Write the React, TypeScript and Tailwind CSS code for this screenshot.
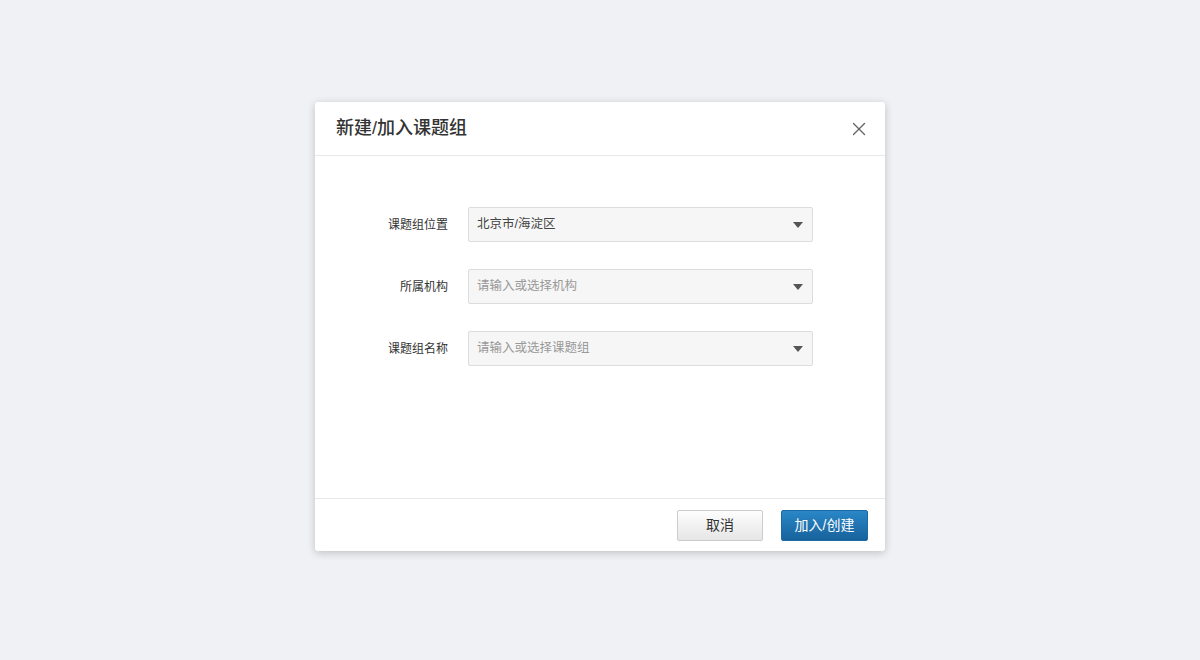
import { X } from "lucide-react";

const fields = [
  { label: "课题组位置", value: "北京市/海淀区", placeholder: "" },
  { label: "所属机构", value: "", placeholder: "请输入或选择机构" },
  { label: "课题组名称", value: "", placeholder: "请输入或选择课题组" },
];

function SelectBox({ value, placeholder }: { value: string; placeholder: string }) {
  return (
    <div className="flex h-[35px] w-[345px] items-center justify-between rounded-[2px] border border-[#dcdcdc] bg-[#f6f6f6] pl-[8px] pr-[9px]">
      <span className={value ? "text-[12.5px] text-[#444]" : "text-[12.5px] text-[#999]"}>
        {value || placeholder}
      </span>
      <span className="h-0 w-0 border-x-[5px] border-t-[6px] border-x-transparent border-t-[#555]" />
    </div>
  );
}

export default function App() {
  return (
    <div
      className="flex h-[660px] w-full items-start justify-center bg-[#f0f1f5] pt-[102px]"
      style={{ fontFamily: '"Liberation Sans", "Noto Sans CJK SC", sans-serif' }}
    >
      <div className="flex h-[449px] w-[570px] flex-col rounded-[3px] bg-white shadow-[0_2px_8px_rgba(0,0,0,0.2)]">
        <div className="flex h-[54px] shrink-0 items-center justify-between border-b border-[#e8e8e8] pl-[21px] pr-[15px]">
          <h2 className="text-[18px] font-medium text-[#333]">新建/加入课题组</h2>
          <X className="h-[22px] w-[22px] text-[#666]" strokeWidth={1.5} />
        </div>

        <div className="flex flex-1 flex-col gap-[27px] pt-[51px]">
          {fields.map((f) => (
            <div key={f.label} className="flex items-center">
              <label className="w-[153px] pr-[20px] text-right text-[12px] text-[#333]">{f.label}</label>
              <SelectBox value={f.value} placeholder={f.placeholder} />
            </div>
          ))}
        </div>

        <div className="flex h-[53px] shrink-0 items-center justify-end gap-[18px] border-t border-[#e8e8e8] pr-[17px]">
          <button className="h-[31px] w-[86px] rounded-[2px] border border-[#ccc] bg-gradient-to-b from-[#fdfdfd] to-[#e6e6e6] text-[14px] text-[#333]">
            取消
          </button>
          <button className="h-[31px] w-[87px] rounded-[2px] border border-[#1b6aa3] bg-gradient-to-b from-[#2a87c7] to-[#17629c] text-[14px] text-white">
            加入/创建
          </button>
        </div>
      </div>
    </div>
  );
}
